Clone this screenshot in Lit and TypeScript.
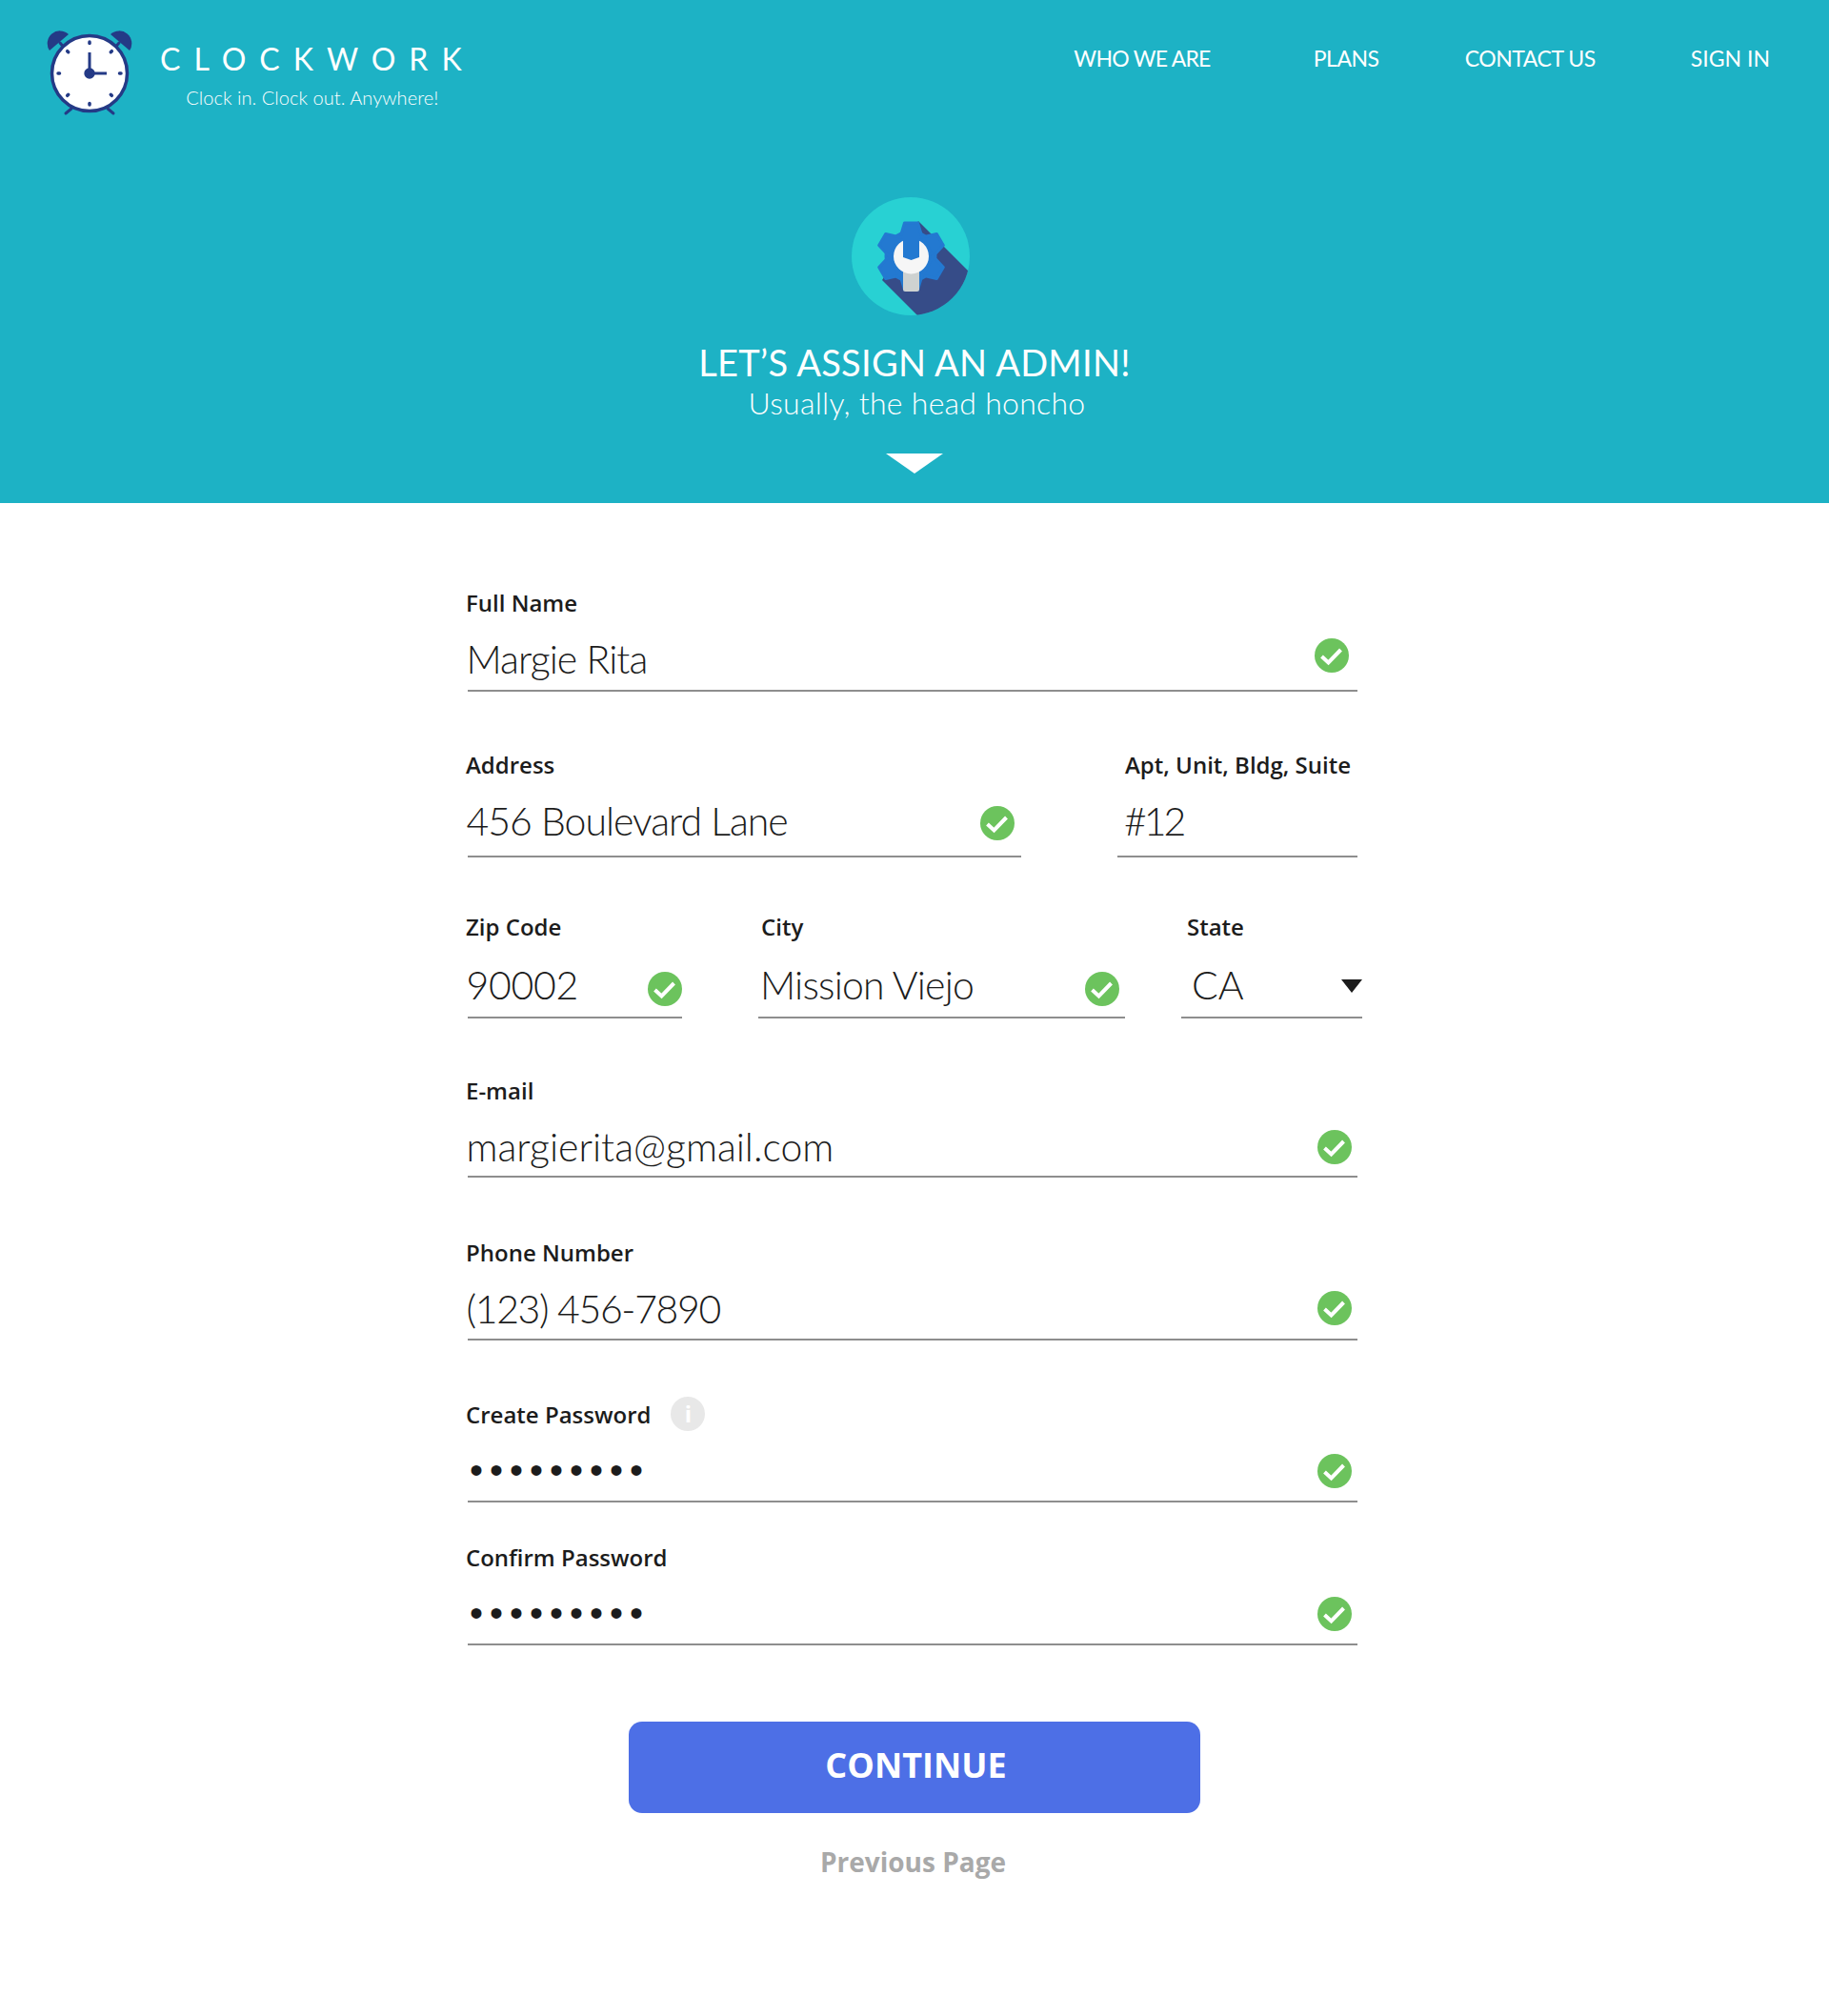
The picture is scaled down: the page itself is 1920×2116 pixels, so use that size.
import { LitElement, html, css, svg } from "lit";
import { customElement } from "lit/decorators.js";

const check = (lift: number) => html`<svg class="check" style="margin-bottom:${lift}px" viewBox="0 0 36 36" aria-hidden="true">
  <circle cx="18" cy="18" r="18" fill="#6cc35d"></circle>
  <path d="M7.5 19 L14.5 25.500 L27.500 12" fill="none" stroke="#fff" stroke-width="4"></path>
</svg>`;

const ticks = [0, 45, 90, 135, 180, 225, 270, 315];

const clock = svg`
  <g fill="#243a86">
    <path d="M4 23 A13.200 13.200 0 0 1 24 6 Z"></path>
    <path d="M88 23 A13.200 13.200 0 0 0 68 6 Z"></path>
  </g>
  <g stroke="#243a86" stroke-width="3" stroke-linecap="round" fill="none">
    <path d="M15 15 L22 23"></path><path d="M77 15 L70 23"></path>
    <path d="M27 84 L21 89"></path><path d="M65 84 L71 89"></path>
  </g>
  <circle cx="46" cy="47" r="39.500" fill="#fff" stroke="#243a86" stroke-width="3.500"></circle>
  <g stroke="#243a86" stroke-width="3.500" stroke-linecap="round">
    ${ticks.map((t) => svg`<path d="M46 14 V15.500" transform="rotate(${t} 46 47)"></path>`)}
  </g>
  <path d="M46 25 V47 H64" fill="none" stroke="#243a86" stroke-width="3"></path>
  <circle cx="46" cy="47" r="5.700" fill="#243a86"></circle>
`;

const teeth = [0, 60, 120, 180, 240, 300];

const admin = svg`
  <defs><clipPath id="disc"><circle cx="62" cy="62" r="62"></circle></clipPath></defs>
  <circle cx="62" cy="62" r="62" fill="#28d1d3"></circle>
  <polygon clip-path="url(#disc)" points="70,25 140,95 140,140 80,135 32,87" fill="#364c88"></polygon>
  <g fill="#2379d1" stroke="#2379d1" stroke-width="3" stroke-linejoin="round">
    <circle cx="62" cy="62" r="26"></circle>
    ${teeth.map((t) => svg`<polygon points="51,42 55.500,27 69.500,27 74,42" transform="rotate(${t} 62.500 62)"></polygon>`)}
  </g>
  <rect x="54" y="74" width="17" height="25" rx="2.500" fill="#ced2d1"></rect>
  <circle cx="62.500" cy="62" r="18.500" fill="#f6f6f6"></circle>
  <path d="M54 40 H71 V63 L62.500 66 L54 63 Z" fill="#2379d1"></path>
`;

interface Field {
  label: string;
  value: string;
  cls: string;
  height: number;
  base: number;
  lift?: number;
  right?: number;
  track?: number;
  kind?: "text" | "dots" | "select" | "info";
}

const rows: { cls: string; fields: Field[] }[] = [
  { cls: "r1", fields: [{ label: "Full Name", value: "Margie Rita", cls: "wide", height: 77, base: 8, lift: 18, right: 9, track: -0.95 }] },
  {
    cls: "r2",
    fields: [
      { label: "Address", value: "456 Boulevard Lane", cls: "address", height: 81, base: 12, lift: 16, right: 7, track: -1 },
      { label: "Apt, Unit, Bldg, Suite", value: "#12", cls: "apt", height: 81, base: 12, track: -3 },
    ],
  },
  {
    cls: "r3",
    fields: [
      { label: "Zip Code", value: "90002", cls: "zip", height: 80, base: 9, lift: 11, right: 0, track: -0.3 },
      { label: "City", value: "Mission Viejo", cls: "city", height: 80, base: 9, lift: 11, right: 6, track: -0.8 },
      { label: "State", value: "CA", cls: "state", height: 80, base: 9, kind: "select" },
    ],
  },
  { cls: "r4", fields: [{ label: "E-mail", value: "margierita@gmail.com", cls: "wide", height: 75, base: 6, lift: 12, right: 6, track: 0 }] },
  { cls: "r5", fields: [{ label: "Phone Number", value: "(123) 456-7890", cls: "wide", height: 76, base: 7, lift: 14, right: 6, track: -1.35 }] },
  { cls: "r6", fields: [{ label: "Create Password", value: "•••••••••", cls: "wide", height: 76, base: 8, lift: 13, right: 6, kind: "info" }] },
  { cls: "r7", fields: [{ label: "Confirm Password", value: "•••••••••", cls: "wide", height: 76, base: 8, lift: 13, right: 6, kind: "dots" }] },
];

@customElement("app-root")
export class AppRoot extends LitElement {
  static styles = css`
    :host { display: block; min-height: 2116px; background: #fff; font-family: "Open Sans", sans-serif; color: #1c1c1c; }
    * { box-sizing: border-box; }
    .hero { height: 528px; background: #1db2c5; color: #fff; font-family: Lato, sans-serif; display: flex; flex-direction: column; }
    .top { display: flex; justify-content: space-between; padding: 30px 62px 0 48px; }
    .brand { display: flex; gap: 28px; }
    .clock { width: 92px; height: 92px; display: block; }
    .brand-text { display: flex; flex-direction: column; align-items: center; padding-top: 12px; }
    .name { font-size: 32px; line-height: 40px; letter-spacing: 14px; font-weight: 400; margin-right: -14px; }
    .tag { font-size: 20px; line-height: 28px; font-weight: 300; margin-top: 6px; letter-spacing: 0.05px; padding-left: 3px; }
    nav { display: flex; padding-top: 14px; }
    nav a { font-size: 23px; line-height: 34px; letter-spacing: -0.45px; font-weight: 400; }
    nav a:nth-child(1) { letter-spacing: -0.75px; }
    nav a:nth-child(2) { margin-left: 108px; }
    nav a:nth-child(3) { margin-left: 90px; }
    nav a:nth-child(4) { margin-left: 100px; letter-spacing: 0; }
    .center { display: flex; flex-direction: column; align-items: center; }
    .admin { width: 124px; height: 124px; display: block; margin: 85px 8px 0 0; }
    h1 { margin: 26px 0 0; font-size: 38px; line-height: 46px; font-weight: 400; letter-spacing: 0.3px; }
    .sub { font-size: 32px; line-height: 42px; font-weight: 300; letter-spacing: 0.27px; margin: -1px 0 0 5px; }
    .arrow { width: 0; height: 0; border-left: 30px solid transparent; border-right: 30px solid transparent; border-top: 21px solid #fff; margin-top: 32px; }

    form { width: 942px; margin: 0 auto; padding-top: 89px; }
    .row { display: flex; }
    .r2 { margin-top: 61px; }
    .r3 { margin-top: 57px; }
    .r4 { margin-top: 60px; }
    .r5 { margin-top: 63px; }
    .r6 { margin-top: 62px; }
    .r7 { margin-top: 42px; }
    .field { display: flex; flex-direction: column; }
    .label { height: 32px; font-size: 24px; line-height: 32px; font-weight: 600; display: flex; align-items: center; gap: 21px; white-space: nowrap; }
    .control { display: flex; justify-content: space-between; align-items: flex-end; border-bottom: 2px solid #8e8e8e; margin-left: 2px; font-family: Lato, sans-serif; font-size: 41px; line-height: 48px; font-weight: 300; }
    .wide { width: 936px; }
    .address { width: 583px; }
    .zip { width: 227px; }
    .wide .text, .address .text, .zip .text { margin-left: -1.5px; }
    .apt { width: 252px; margin-left: 101px; }
    .apt .label { padding-left: 8px; }
    .apt .control { margin-left: 0; padding-left: 7px; }
    .city { width: 385px; margin-left: 80px; }
    .city .label { padding-left: 3px; }
    .city .control { margin-left: 0; padding-left: 2px; }
    .state { width: 190px; margin-left: 59px; }
    .state .label { padding-left: 6px; }
    .state .control { margin-left: 0; padding-left: 11px; }
    .dots { font-family: "Liberation Sans", sans-serif; font-size: 40px; letter-spacing: 7px; padding-left: 2px; font-weight: 400; }
    .check { width: 36px; height: 36px; display: block; flex: none; }
    .caret { width: 0; height: 0; border-left: 11px solid transparent; border-right: 11px solid transparent; border-top: 14px solid #1c1c1c; margin-bottom: 16px; }
    .info { width: 36px; height: 36px; border-radius: 50%; background: #e8e8e8; color: #fff; font-size: 24px; font-weight: 700; line-height: 36px; text-align: center; margin-top: -2px; }
    .actions { display: flex; flex-direction: column; align-items: center; padding-top: 80px; }
    .continue { width: 600px; height: 96px; border: 0; border-radius: 14px; background: #4d6fe6; color: #fff; font-family: "Open Sans", sans-serif; font-size: 36px; font-weight: 700; padding: 0 0 5px 3px; }
    .prev { margin-top: 31px; font-size: 28px; line-height: 40px; font-weight: 700; color: #a9a9a9; margin-right: 3px; }
  `;

  private renderField(f: Field) {
    const isDots = f.kind === "dots" || f.kind === "info";
    return html`<div class="field ${f.cls}">
      <div class="label">${f.label}${f.kind === "info" ? html`<span class="info">i</span>` : ""}</div>
      <div class="control" style="height:${f.height}px;padding-bottom:${f.base}px;padding-right:${f.right ?? 0}px">
        <span class=${isDots ? "dots" : "text"} style=${f.track !== undefined ? `letter-spacing:${f.track}px` : ""}>${f.value}</span>
        ${f.kind === "select"
          ? html`<span class="caret"></span>`
          : f.lift !== undefined
          ? check(f.lift - f.base)
          : ""}
      </div>
    </div>`;
  }

  render() {
    return html`
      <header class="hero">
        <div class="top">
          <div class="brand">
            <svg class="clock" viewBox="0 0 92 92" aria-hidden="true">${clock}</svg>
            <div class="brand-text">
              <div class="name">CLOCKWORK</div>
              <div class="tag">Clock in. Clock out. Anywhere!</div>
            </div>
          </div>
          <nav><a>WHO WE ARE</a><a>PLANS</a><a>CONTACT US</a><a>SIGN IN</a></nav>
        </div>
        <div class="center">
          <svg class="admin" viewBox="0 0 124 124" aria-hidden="true">${admin}</svg>
          <h1>LET’S ASSIGN AN ADMIN!</h1>
          <div class="sub">Usually, the head honcho</div>
          <div class="arrow"></div>
        </div>
      </header>
      <form>
        ${rows.map((r) => html`<div class="row ${r.cls}">${r.fields.map((f) => this.renderField(f))}</div>`)}
        <div class="actions">
          <button class="continue" type="button">CONTINUE</button>
          <div class="prev">Previous Page</div>
        </div>
      </form>
    `;
  }
}
